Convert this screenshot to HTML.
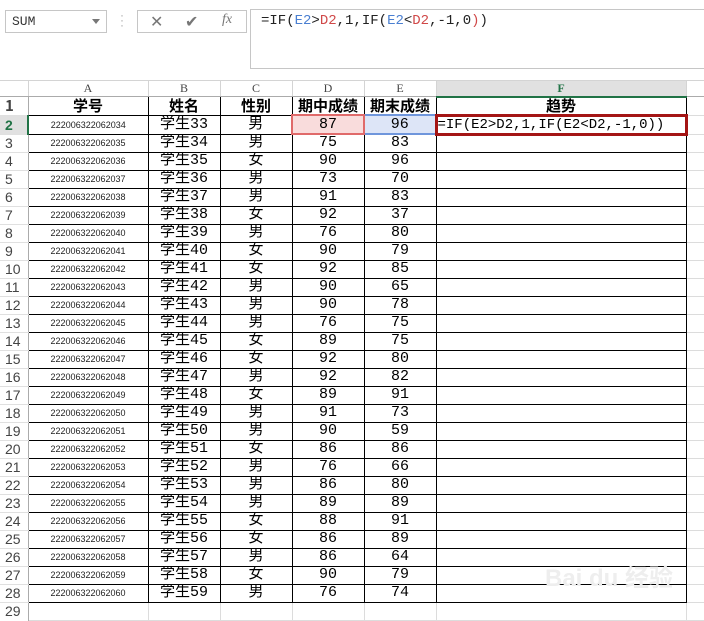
<!DOCTYPE html>
<html><head><meta charset="utf-8"><style>
*{margin:0;padding:0;box-sizing:border-box}
body{width:704px;height:615px;overflow:hidden;background:#fff;font-family:"Liberation Sans","Noto Sans CJK SC",sans-serif;position:relative}
.nb{position:absolute;left:5px;top:10px;width:102px;height:23px;border:1px solid #c6c6c6;font-family:"Liberation Mono",monospace;font-size:13px;padding:3px 6px;color:#333}
.nb:after{content:"";position:absolute;right:6px;top:8px;border:4px solid transparent;border-top:5px solid #777}
.dots{position:absolute;left:120px;top:13px;color:#aaa;font-size:12px;line-height:5px;width:3px}
.tb{position:absolute;left:137px;top:10px;width:110px;height:23px;border:1px solid #c6c6c6;color:#777;font-size:16px}
.fb{position:absolute;left:250px;top:9px;width:460px;height:60px;border:1px solid #c6c6c6;border-right:none;font-family:"Liberation Mono",monospace;font-size:14px;padding:3px 10px;color:#222}
table{position:absolute;left:0;top:80px;border-collapse:collapse;table-layout:fixed;width:716px}
td{height:18px;border:1px solid #000;text-align:center;font-size:15px;padding:0;white-space:nowrap;overflow:hidden;line-height:16px;font-family:"Liberation Mono","Noto Sans CJK SC",monospace}
tr.h td{height:16px;line-height:13px;background:#fff;border:1px solid #d4d4d4;color:#444;font-size:12px;font-family:"Liberation Serif",serif;border-bottom:1px solid #ababab}
td.r{border:none;border-right:1px solid #ababab;border-bottom:1px solid #e0e0e0;color:#444;font-size:14px;font-family:"Liberation Sans",sans-serif;text-align:left;padding-left:5px;background:#fff}
td.a{font-size:9px;font-family:"Liberation Sans",sans-serif;color:#222}
td.g{border:none;border-right:1px solid #dcdcdc;border-bottom:1px solid #dcdcdc}
tr.t td{font-weight:bold;font-size:15px;font-family:"Noto Sans CJK SC",sans-serif}
</style></head><body>
<div class="nb">SUM</div>
<div class="dots">·<br>·<br>·</div>
<div class="tb"><span style="position:absolute;left:12px;top:1px">✕</span><span style="position:absolute;left:47px;top:1px">✔</span><span style="position:absolute;left:84px;top:1px;font-style:italic;font-family:'Liberation Serif';font-size:14px">fx</span></div>
<div class="fb">=IF(<span style="color:#4a7fd1">E2</span>&gt;<span style="color:#d04848">D2</span>,1,IF(<span style="color:#4a7fd1">E2</span>&lt;<span style="color:#d04848">D2</span>,-1,0<span style="color:#d04848">)</span>)</div>
<table>
<colgroup><col style="width:28px"><col style="width:120px"><col style="width:72px"><col style="width:72px"><col style="width:72px"><col style="width:72px"><col style="width:250px"><col style="width:30px"></colgroup>
<tr class="h"><td style="border-left:none"></td><td>A</td><td>B</td><td>C</td><td>D</td><td>E</td><td style="background:#e1e1e1;color:#217346;font-weight:bold;border-bottom:2px solid #217346">F</td><td style="border-right:none"></td></tr>
<tr class="t"><td class="r">1</td><td>学号</td><td>姓名</td><td>性别</td><td>期中成绩</td><td>期末成绩</td><td>趋势</td><td class="g"></td></tr>
<tr><td class="r" style="background:#e1e1e1;color:#217346;font-weight:bold;border-right:2px solid #217346">2</td><td class="a">222006322062034</td><td>学生33</td><td>男</td><td style="background:#f9dcdc;border:2px solid #e06a6a">87</td><td style="background:#dde5f7;border:2px solid #6f96dc">96</td><td style="border:3px solid #a41515;text-align:left;font-size:14px;padding-left:0">=IF(E2&gt;D2,1,IF(E2&lt;D2,-1,0))</td><td class="g"></td></tr>
<tr><td class="r">3</td><td class="a">222006322062035</td><td>学生34</td><td>男</td><td>75</td><td>83</td><td></td><td class="g"></td></tr>
<tr><td class="r">4</td><td class="a">222006322062036</td><td>学生35</td><td>女</td><td>90</td><td>96</td><td></td><td class="g"></td></tr>
<tr><td class="r">5</td><td class="a">222006322062037</td><td>学生36</td><td>男</td><td>73</td><td>70</td><td></td><td class="g"></td></tr>
<tr><td class="r">6</td><td class="a">222006322062038</td><td>学生37</td><td>男</td><td>91</td><td>83</td><td></td><td class="g"></td></tr>
<tr><td class="r">7</td><td class="a">222006322062039</td><td>学生38</td><td>女</td><td>92</td><td>37</td><td></td><td class="g"></td></tr>
<tr><td class="r">8</td><td class="a">222006322062040</td><td>学生39</td><td>男</td><td>76</td><td>80</td><td></td><td class="g"></td></tr>
<tr><td class="r">9</td><td class="a">222006322062041</td><td>学生40</td><td>女</td><td>90</td><td>79</td><td></td><td class="g"></td></tr>
<tr><td class="r">10</td><td class="a">222006322062042</td><td>学生41</td><td>女</td><td>92</td><td>85</td><td></td><td class="g"></td></tr>
<tr><td class="r">11</td><td class="a">222006322062043</td><td>学生42</td><td>男</td><td>90</td><td>65</td><td></td><td class="g"></td></tr>
<tr><td class="r">12</td><td class="a">222006322062044</td><td>学生43</td><td>男</td><td>90</td><td>78</td><td></td><td class="g"></td></tr>
<tr><td class="r">13</td><td class="a">222006322062045</td><td>学生44</td><td>男</td><td>76</td><td>75</td><td></td><td class="g"></td></tr>
<tr><td class="r">14</td><td class="a">222006322062046</td><td>学生45</td><td>女</td><td>89</td><td>75</td><td></td><td class="g"></td></tr>
<tr><td class="r">15</td><td class="a">222006322062047</td><td>学生46</td><td>女</td><td>92</td><td>80</td><td></td><td class="g"></td></tr>
<tr><td class="r">16</td><td class="a">222006322062048</td><td>学生47</td><td>男</td><td>92</td><td>82</td><td></td><td class="g"></td></tr>
<tr><td class="r">17</td><td class="a">222006322062049</td><td>学生48</td><td>女</td><td>89</td><td>91</td><td></td><td class="g"></td></tr>
<tr><td class="r">18</td><td class="a">222006322062050</td><td>学生49</td><td>男</td><td>91</td><td>73</td><td></td><td class="g"></td></tr>
<tr><td class="r">19</td><td class="a">222006322062051</td><td>学生50</td><td>男</td><td>90</td><td>59</td><td></td><td class="g"></td></tr>
<tr><td class="r">20</td><td class="a">222006322062052</td><td>学生51</td><td>女</td><td>86</td><td>86</td><td></td><td class="g"></td></tr>
<tr><td class="r">21</td><td class="a">222006322062053</td><td>学生52</td><td>男</td><td>76</td><td>66</td><td></td><td class="g"></td></tr>
<tr><td class="r">22</td><td class="a">222006322062054</td><td>学生53</td><td>男</td><td>86</td><td>80</td><td></td><td class="g"></td></tr>
<tr><td class="r">23</td><td class="a">222006322062055</td><td>学生54</td><td>男</td><td>89</td><td>89</td><td></td><td class="g"></td></tr>
<tr><td class="r">24</td><td class="a">222006322062056</td><td>学生55</td><td>女</td><td>88</td><td>91</td><td></td><td class="g"></td></tr>
<tr><td class="r">25</td><td class="a">222006322062057</td><td>学生56</td><td>女</td><td>86</td><td>89</td><td></td><td class="g"></td></tr>
<tr><td class="r">26</td><td class="a">222006322062058</td><td>学生57</td><td>男</td><td>86</td><td>64</td><td></td><td class="g"></td></tr>
<tr><td class="r">27</td><td class="a">222006322062059</td><td>学生58</td><td>女</td><td>90</td><td>79</td><td></td><td class="g"></td></tr>
<tr><td class="r">28</td><td class="a">222006322062060</td><td>学生59</td><td>男</td><td>76</td><td>74</td><td></td><td class="g"></td></tr>
<tr><td class="r" style="border-bottom:none">29</td><td class="g" style="border-top:1px solid #000"></td><td class="g" style="border-top:1px solid #000"></td><td class="g" style="border-top:1px solid #000"></td><td class="g" style="border-top:1px solid #000"></td><td class="g" style="border-top:1px solid #000"></td><td class="g" style="border-top:1px solid #000"></td><td class="g"></td></tr>
</table>
<div style="position:absolute;left:545px;top:558px;color:#eeeeee;font-size:24px;font-weight:bold;font-family:'Liberation Sans','Noto Sans CJK SC',sans-serif">Bai du 经验</div>
</body></html>
